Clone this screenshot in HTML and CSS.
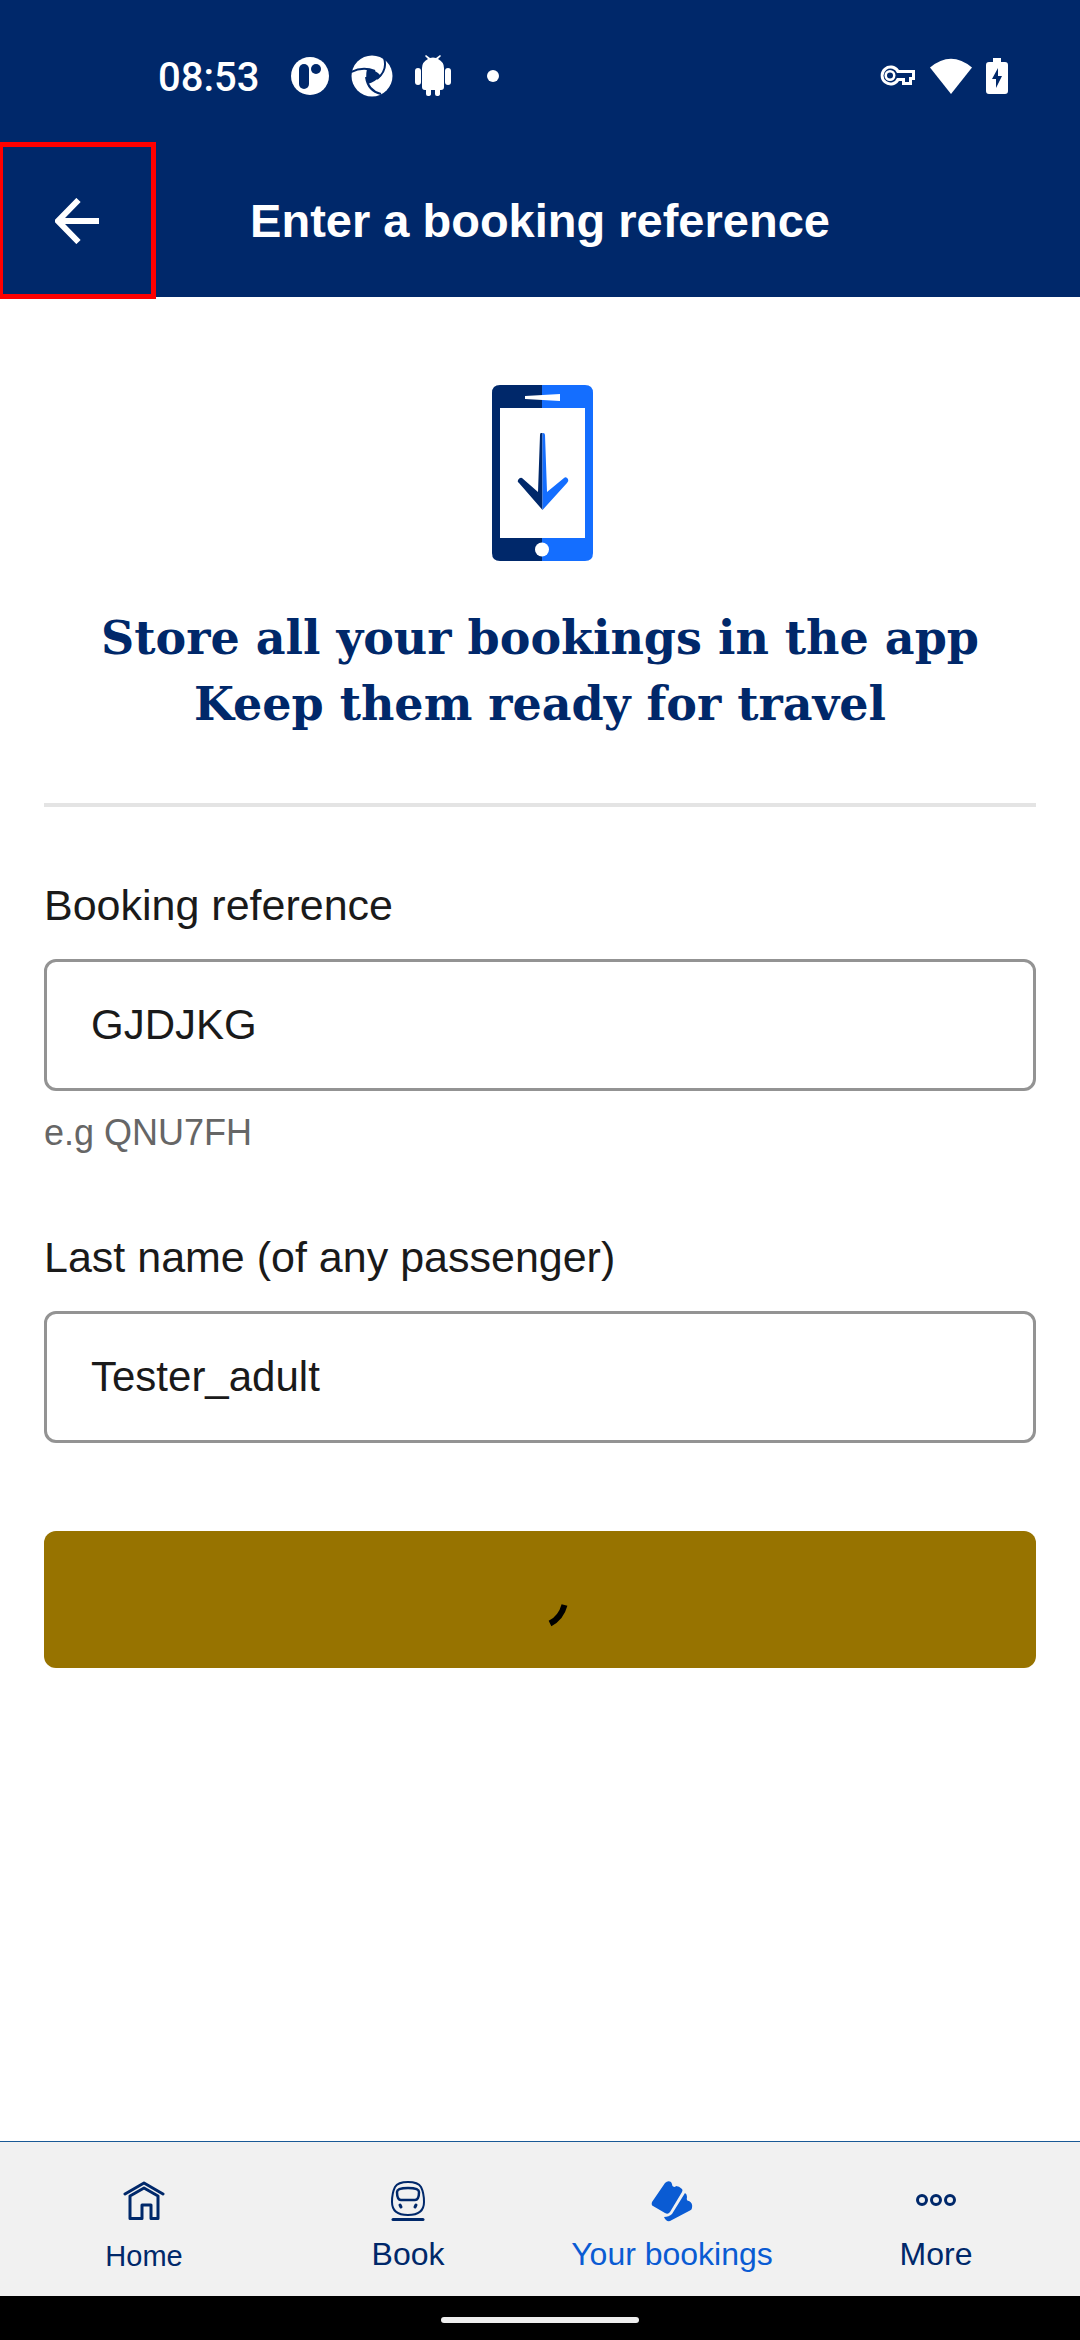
FILE: index.html
```html
<!DOCTYPE html>
<html lang="en">
<head>
<meta charset="utf-8">
<meta name="viewport" content="width=device-width, initial-scale=1">
<title>Enter a booking reference</title>
<link rel="stylesheet" href="styles.css">
</head>
<body>
<div class="screen">
  <div class="status-bar">
    <span class="clock">08:53</span>
    <div class="notifications">
      <svg width="38" height="40" viewBox="0 0 38 40"><circle cx="19" cy="20" r="19" fill="#fff"/><rect x="8" y="8" width="10" height="25" rx="5" fill="#00286a"/><circle cx="25" cy="13" r="5" fill="#00286a"/></svg>
      <svg width="42" height="42" viewBox="0 0 42 42"><circle cx="21" cy="21" r="20.500" fill="#fff"/><path d="M16 14Q24 14 30 21Q25 26 17 29Q14 22 16 14Z" fill="#00286a"/><path d="M0 17Q12 11 24 16M33 3Q37 15 26 24M30 39Q17 36 15 22" fill="none" stroke="#00286a" stroke-width="2"/></svg>
      <svg width="36" height="42" viewBox="0 0 36 42" fill="#fff"><path d="M7 13Q7 7 13 4L10 1L11 0L15 3Q18 2 21 3L25 0L26 1L23 4Q29 7 29 13V32Q29 35 26 35H25V39Q25 41 22 41Q20 41 20 39V35H16V39Q16 41 13 41Q11 41 11 39V35H10Q7 35 7 32Z"/><rect x="0" y="13" width="6" height="17" rx="3"/><rect x="30" y="13" width="6" height="17" rx="3"/></svg>
      <span class="dot"></span>
    </div>
    <div class="indicators">
      <svg width="36" height="22" viewBox="0 0 36 22"><path d="M19 5A10 10 0 1 0 19 16H22V20H32V15H35V5Z" fill="#fff"/><path d="M17 8A7 7 0 1 0 17 13H25V17H29V12H32V8Z" fill="#00286a"/><circle cx="10" cy="10.500" r="5.500" fill="#fff"/><circle cx="10" cy="10.500" r="3" fill="#00286a"/></svg>
      <svg width="42" height="36" viewBox="0 0 42 36"><path d="M0 9.500Q21-8 42 9.500L21 36Z" fill="#fff"/></svg>
      <svg width="22" height="36" viewBox="0 0 22 36"><path d="M7 0H15V4H19Q22 4 22 7V33Q22 36 19 36H3Q0 36 0 33V7Q0 4 3 4H7Z" fill="#fff"/><path d="M12 10V18H16L10 30V21H6Z" fill="#00286a"/></svg>
    </div>
  </div>

  <header class="app-bar">
    <button class="back" type="button" aria-label="Back">
      <svg width="44" height="46" viewBox="0 0 44 46" fill="none" stroke="#fff" stroke-width="6"><path d="M23.500 2L3 23L23.500 44M3 23H44"/></svg>
    </button>
    <h1 class="title">Enter a booking reference</h1>
  </header>

  <main class="content">
    <svg class="phone" width="106" height="176" viewBox="-5 0 106 176">
      <path d="M50 0H8Q0 0 0 8V168Q0 176 8 176H50Z" fill="#00286a"/>
      <path d="M50 0H93Q101 0 101 8V168Q101 176 93 176H50Z" fill="#146eff"/>
      <path d="M8 23H93V153H8ZM33 11L68 9V16L33 14Z" fill="#fff"/>
      <circle cx="50" cy="164.500" r="7" fill="#fff"/>
      <path d="M50.500 48H49Q48 48 48 50L46 107L30 93Q28 92 26 95Q25 97 27 98L50.500 125Z" fill="#00286a"/>
      <path d="M50.500 48H51Q53 48 53 50L55 107L72 93Q74 91 76 94Q77 96 75 98L50.500 125Z" fill="#146eff"/>
    </svg>
    <h2 class="headline">Store all your bookings in the app<br>Keep them ready for travel</h2>
    <hr class="rule">
    <form class="form">
      <div class="field">
        <label class="label" for="reference">Booking reference</label>
        <input class="input" id="reference" type="text" value="GJDJKG" aria-describedby="reference-hint">
        <p class="hint" id="reference-hint">e.g QNU7FH</p>
      </div>
      <div class="field">
        <label class="label" for="last-name">Last name (of any passenger)</label>
        <input class="input" id="last-name" type="text" value="Tester_adult">
      </div>
      <button class="submit" type="button" aria-label="Loading">
        <svg width="60" height="60" viewBox="0 0 60 60" fill="none" stroke="#000" stroke-width="6"><path d="M54.500 35Q51 48 40 53.500"/></svg>
      </button>
    </form>
  </main>

  <nav class="tabs">
    <a class="tab tab-home" href="#home">
      <svg width="42" height="42" viewBox="0 0 42 42" fill="none" stroke="#00286a" stroke-width="3" stroke-linecap="round" stroke-linejoin="round"><path d="M2 14L21 3L40 14M7 38.500V16L21 8L35 16V38.500H28V25H19V38.500Z"/></svg>
      <span>Home</span>
    </a>
    <a class="tab" href="#book">
      <svg width="42" height="42" viewBox="0 0 42 42" fill="none" stroke="#00286a" stroke-width="2" stroke-linecap="round"><path d="M21 2Q31 2 34 7Q37 13 37 22Q37 35 21 35Q5 35 5 22Q5 13 8 7Q11 2 21 2Z"/><path d="M21 8Q32 8 32 12Q32 20 28 20H14Q10 20 10 12Q10 8 21 8Z" stroke-width="2.500"/><path d="M13 25L14 27M29 25L28 27" stroke-width="3"/><path d="M6 39.500H36" stroke-width="3"/></svg>
      <span>Book</span>
    </a>
    <a class="tab tab-current" href="#bookings" aria-current="page">
      <svg width="42" height="42" viewBox="0 0 42 42" fill="#0a5bd3"><path d="M14 3Q17 0 20 2L21 4Q21 7 24 7L25 6Q28 6 31 9Q32 10 31 12L19 32Q17 35 14 33L2 26Q0 25 1 22Z"/><path d="M34 13Q36 14 36 17Q35 21 38 21Q42 23 41 28Q41 30 38 31L19 41Q15 42 13 37Q18 37 21 34Z"/></svg>
      <span>Your bookings</span>
    </a>
    <a class="tab" href="#more">
      <svg width="42" height="42" viewBox="0 0 42 42" fill="none" stroke="#00286a" stroke-width="3"><circle cx="7" cy="20" r="4.500"/><circle cx="21" cy="20" r="4.500"/><circle cx="35" cy="20" r="4.500"/></svg>
      <span>More</span>
    </a>
  </nav>
  <div class="gesture-bar"><span class="handle"></span></div>
</div>
</body>
</html>
```
FILE: styles.css
```css
* { box-sizing: border-box; }

body {
  margin: 0;
  background: #fff;
  color: #1a1a1a;
  font-family: "Liberation Sans", Arial, sans-serif;
}

svg { display: block; flex: none; }

.screen {
  display: flex;
  flex-direction: column;
  min-height: 100vh;
}

/* System status bar */
.status-bar {
  display: flex;
  align-items: center;
  height: 144px;
  padding: 8px 72px 0 158px;
  background: #00286a;
  color: #fff;
}

.clock {
  padding-top: 4px;
  font: 500 40px/48px Roboto, sans-serif;
}

.notifications {
  display: flex;
  align-items: center;
  gap: 22px;
  margin-left: 32px;
}

.dot {
  width: 12px;
  height: 12px;
  margin-left: 14px;
  border-radius: 50%;
  background: #fff;
}

.indicators {
  display: flex;
  align-items: center;
  gap: 14px;
  margin-left: auto;
}

/* App bar */
.app-bar {
  display: grid;
  grid-template-columns: 154px 1fr 154px;
  align-items: center;
  background: #00286a;
  color: #fff;
}

.back {
  display: flex;
  align-items: center;
  justify-content: center;
  height: 153px;
  padding: 0;
  border: 0;
  background: none;
  outline: 5px solid #f00;
  outline-offset: -3px;
}

.title {
  margin: 0;
  font-size: 47px;
  line-height: 56px;
  text-align: center;
}

/* Booking form */
.content {
  flex: 1;
  padding: 88px 44px;
}

.phone { margin: 0 auto; }

.headline {
  margin: 44px 0 0;
  color: #00286a;
  font: 700 46px/66px "DejaVu Serif", serif;
  text-align: center;
}

.rule {
  height: 4px;
  margin: 66px 0 0;
  border: 0;
  background: #e4e4e4;
}

.form {
  display: flex;
  flex-direction: column;
  margin-top: 70px;
}

.field { margin-bottom: 88px; }

.label {
  display: block;
  margin-bottom: 26px;
  font-size: 43px;
  line-height: 56px;
}

.input {
  display: block;
  width: 100%;
  height: 132px;
  padding: 0 44px;
  border: 3px solid #939393;
  border-radius: 12px;
  background: #fff;
  color: #1a1a1a;
  font: inherit;
  font-size: 42px;
}

.hint {
  margin: 18px 0 -16px;
  color: #666;
  font-size: 36px;
  line-height: 48px;
}

.submit {
  display: flex;
  align-items: center;
  justify-content: center;
  height: 137px;
  padding: 0;
  border: 0;
  border-radius: 12px;
  background: #977300;
}

/* Bottom navigation */
.tabs {
  display: grid;
  grid-template-columns: repeat(4, 1fr);
  height: 155px;
  padding: 38px 12px 0;
  border-top: 1px solid #1a5a96;
  background: #f1f1f1;
}

.tab {
  display: flex;
  flex-direction: column;
  align-items: center;
  gap: 12px;
  color: #00286a;
  font-size: 32px;
  line-height: 40px;
  text-decoration: none;
}

.tab-home { font-size: 29px; gap: 14px; }

.tab-current { color: #0a5bd3; }

.gesture-bar {
  display: flex;
  align-items: center;
  justify-content: center;
  height: 44px;
  padding-top: 4px;
  background: #000;
}

.handle {
  width: 198px;
  height: 6px;
  border-radius: 3px;
  background: #eee;
}
```
